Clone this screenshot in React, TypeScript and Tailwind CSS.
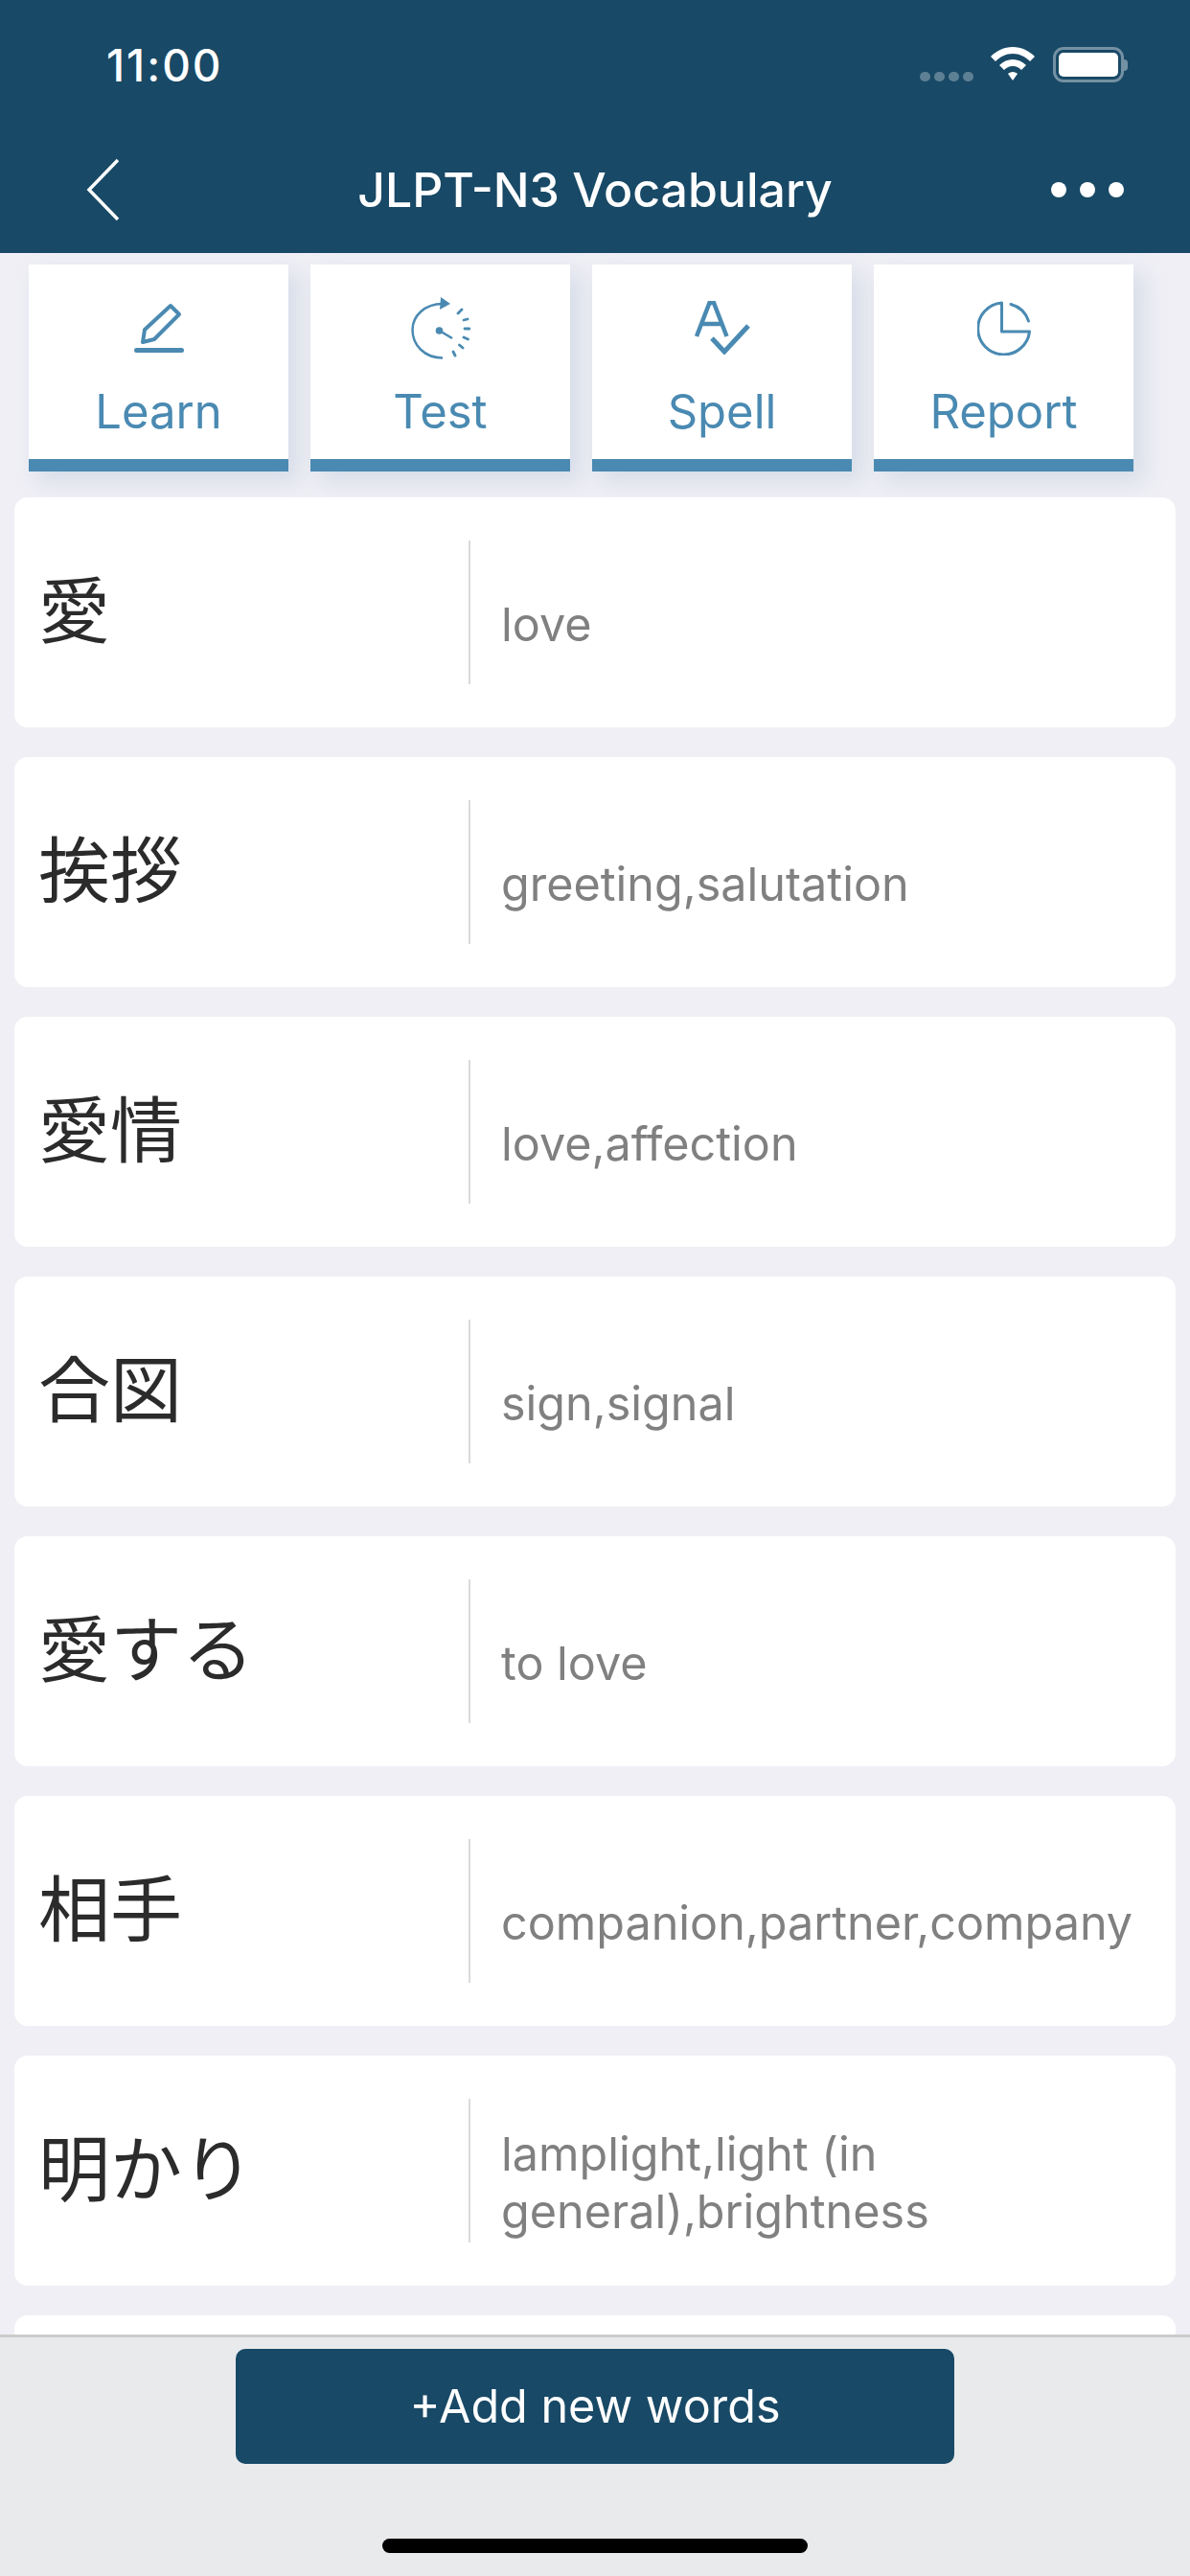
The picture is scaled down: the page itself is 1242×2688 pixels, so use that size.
const words = [
  { jp: "愛", en: "love" },
  { jp: "挨拶", en: "greeting,salutation" },
  { jp: "愛情", en: "love,affection" },
  { jp: "合図", en: "sign,signal" },
  { jp: "愛する", en: "to love" },
  { jp: "相手", en: "companion,partner,company" },
  { jp: "明かり", en: "lamplight,light (in general),brightness" },
  { jp: "", en: "" },
];

const LearnIcon = () => (
  <svg width="52" height="52" viewBox="0 0 52 52" fill="none" stroke="#4a8ab2">
    <path d="M38 3 L47 12 L21 38 L9 41 L11 28 Z" strokeWidth="4" strokeLinejoin="round" />
    <path d="M2.5 49.5 H49.5" strokeWidth="5" strokeLinecap="round" />
  </svg>
);

const TestIcon = () => (
  <svg width="62" height="65" viewBox="0 0 62 65" fill="none" stroke="#4a8ab2">
    <path d="M33 7 C14 7 1.5 20 1.5 34 C1.5 50 14 63.5 33 63.5" strokeWidth="2.5" />
    <path d="M31 0 L41 7 L30 13 Z" fill="#4a8ab2" stroke="none" />
    <path d="M49 17 L53 13 M55 24 L59 23 M56 33 L61 33 M55 42 L59.5 44 M50.5 50 L54 53 M44 57 L46 61" strokeWidth="2.8" strokeLinecap="round" />
    <circle cx="29.5" cy="35" r="3.8" fill="#4a8ab2" stroke="none" />
    <path d="M29.5 35 L43 43" strokeWidth="2.6" />
  </svg>
);

const SpellIcon = () => (
  <svg width="58" height="56" viewBox="0 0 58 56" fill="none" stroke="#4a8ab2">
    <path d="M2 37 L15.5 2 H20 L33.5 37 M7 24 H28.5" strokeWidth="4.5" />
    <path d="M18 39 L31 53 L56 26" strokeWidth="5" />
  </svg>
);

const ReportIcon = () => (
  <svg width="56" height="57" viewBox="0 0 56 57" fill="none" stroke="#4a8ab2" strokeWidth="3">
    <path d="M25.5 2 A27 27 0 1 0 54.5 32 H25.5 Z" strokeLinejoin="round" />
    <path d="M35 3.5 A27 27 0 0 1 53.5 21" strokeLinecap="round" />
  </svg>
);

const tabs = [
  { label: "Learn", icon: <LearnIcon /> },
  { label: "Test", icon: <TestIcon /> },
  { label: "Spell", icon: <SpellIcon /> },
  { label: "Report", icon: <ReportIcon /> },
];

const WifiIcon = () => (
  <svg width="50" height="36" viewBox="0 0 48 36" fill="#fff">
    <path d="M24 0 C33 0 41 4 47 10 L42 15 C37 10 31 7 24 7 C17 7 11 10 6 15 L1 10 C7 4 15 0 24 0 Z" />
    <path d="M24 13 C29 13 34 15 38 19 L33 24 C31 22 28 20 24 20 C20 20 17 22 15 24 L10 19 C14 15 19 13 24 13 Z" />
    <path d="M24 26 C26 26 28 27 29 28 L24 35 L19 28 C20 27 22 26 24 26 Z" />
  </svg>
);

const StatusBar = () => (
  <div className="flex h-[132px] items-start justify-between pl-[111px] pr-[65px]">
    <span className="mt-[41px] text-[46px] leading-[55px] font-medium tracking-[2px] text-white">11:00</span>
    <div className="mt-[49px] flex items-start">
      <div className="mt-[26px] mr-[16px] flex gap-[4px]">
        <span className="h-[10px] w-[11px] rounded-full bg-white/30" />
        <span className="h-[10px] w-[11px] rounded-full bg-white/30" />
        <span className="h-[10px] w-[11px] rounded-full bg-white/30" />
        <span className="h-[10px] w-[11px] rounded-full bg-white/30" />
      </div>
      <WifiIcon />
      <div className="ml-[17px] flex items-center">
        <div className="h-[37px] w-[74px] rounded-[11px] border-[3px] border-white/40 p-[3px]">
          <div className="h-full w-full rounded-[5px] bg-white" />
        </div>
        <div className="h-[12px] w-[4px] rounded-r-full bg-white/40" />
      </div>
    </div>
  </div>
);

const NavBar = () => (
  <div className="grid h-[132px] grid-cols-[1fr_auto_1fr] items-center px-[69px]">
    <svg className="ml-[21px]" width="36" height="66" viewBox="0 0 36 66" fill="none" stroke="#fff" strokeWidth="3.5">
      <path d="M33 2 L3 33 L33 64" />
    </svg>
    <span className="text-[50px] font-medium text-white">JLPT-N3 Vocabulary</span>
    <div className="flex justify-end gap-[14px]">
      <span className="h-[16px] w-[16px] rounded-full bg-white" />
      <span className="h-[16px] w-[16px] rounded-full bg-white" />
      <span className="h-[16px] w-[16px] rounded-full bg-white" />
    </div>
  </div>
);

const TabCard = ({ label, icon }: { label: string; icon: React.ReactNode }) => (
  <div className="flex h-[216px] w-[271px] flex-col items-center border-b-[13px] border-[#4a8ab2] bg-white shadow-[10px_10px_20px_rgba(170,185,210,0.35)]">
    <div className="flex h-[124px] items-center pt-[8px]">{icon}</div>
    <span className="text-[49px] leading-[60px] text-[#4a8ab2]">{label}</span>
  </div>
);

const WordRow = ({ jp, en }: { jp: string; en: string }) => (
  <div className="flex h-[240px] shrink-0 items-center rounded-[14px] bg-white">
    <div className="w-[474px] pb-[12px] pl-[25px] text-[75px] leading-[90px] text-[#2b2b2b]" style={{ fontFamily: '"Noto Sans CJK JP", sans-serif' }}>
      {jp}
    </div>
    {jp && (
      <>
        <div className="h-[150px] w-[2px] bg-[#dadada]" />
        <div className="flex h-[150px] w-[680px] items-center pt-[26px] pl-[32px] text-[48.5px] leading-[60px] text-[#808080]">
          <span>{en}</span>
        </div>
      </>
    )}
  </div>
);

export default function App() {
  return (
    <div className="flex h-[2688px] w-[1242px] flex-col overflow-hidden bg-[#efeff5]" style={{ fontFamily: 'Inter, "Liberation Sans", sans-serif' }}>
      <div className="shrink-0 bg-[#184966]">
        <StatusBar />
        <NavBar />
      </div>
      <div className="flex shrink-0 justify-between pl-[30px] pr-[59px] pt-[12px]">
        {tabs.map((t) => (
          <TabCard key={t.label} label={t.label} icon={t.icon} />
        ))}
      </div>
      <div className="flex min-h-0 flex-1 flex-col gap-[31px] overflow-hidden px-[15px] pt-[27px]">
        {words.map((w, i) => (
          <WordRow key={i} jp={w.jp} en={w.en} />
        ))}
      </div>
      <div className="relative flex h-[252px] shrink-0 justify-center border-t-[3px] border-[#cbcbcb] bg-[#e9eaec] pt-[12px]">
        <button className="h-[120px] w-[750px] rounded-[10px] bg-[#184966] text-[48.5px] text-white">+Add new words</button>
        <div className="absolute bottom-[24px] left-[399px] h-[15px] w-[444px] rounded-full bg-black" />
      </div>
    </div>
  );
}
